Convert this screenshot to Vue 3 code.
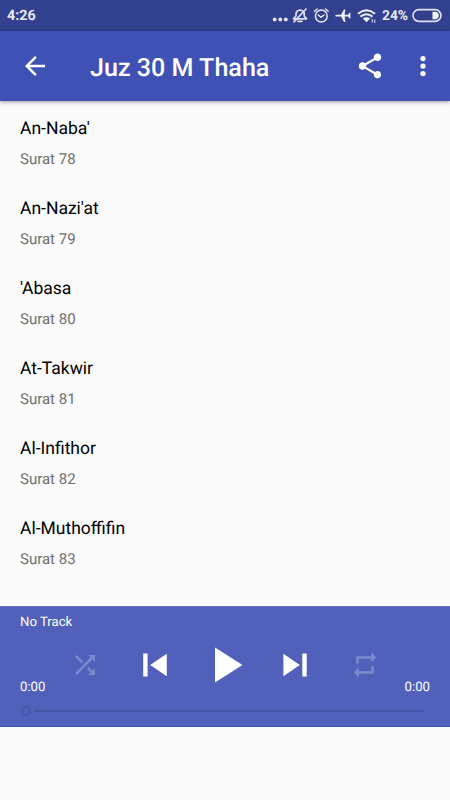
<script setup>
const tracks = [
  { name: "An-Naba'", info: 'Surat 78' },
  { name: "An-Nazi'at", info: 'Surat 79' },
  { name: "'Abasa", info: 'Surat 80' },
  { name: 'At-Takwir', info: 'Surat 81' },
  { name: 'Al-Infithor', info: 'Surat 82' },
  { name: 'Al-Muthoffifin', info: 'Surat 83' },
]
</script>

<template>
  <div class="screen">
    <div class="status">
      <span class="clock">4:26</span>
      <svg class="status-icons" width="108" height="31" viewBox="0 0 108 31">
        <g fill="#e3e5f2">
          <circle cx="2.7" cy="19.5" r="1.9" /><circle cx="8.3" cy="19.5" r="1.9" /><circle cx="13.8" cy="19.5" r="1.9" />
        </g>
        <g fill="none" stroke="#dfe2f1" stroke-width="1.7" stroke-linecap="round" stroke-linejoin="round">
          <path d="M21.5 18.8 L24 16 V13.5 Q24.6 10.4 28 10 Q31.7 10.4 32.2 13.5 V16 L34.6 18.8 Z M26 21.3 H30" />
          <path d="M34 9 L22 21.8" />
        </g>
        <g fill="none" stroke="#e6e8f4" stroke-width="1.5" stroke-linecap="round">
          <circle cx="49.3" cy="16" r="5.9" />
          <path d="M46.3 15 L49 17.3 L52 15 M42.5 11.2 L45.1 9 M56.1 11.2 L53.5 9" />
        </g>
        <path fill="#f0f1f8" d="M63.2 15.7 Q63.5 14.9 65 14.8 H69 L72 9.4 H73.4 L72.6 14.8 H76.2 L77.4 12.8 H78.4 V18.6 H77.4 L76.2 16.6 H72.6 L73.4 22 H72 L69 16.6 H65 Q63.5 16.5 63.2 15.7Z" />
        <g fill="none" stroke="#f0f1f8" stroke-width="2">
          <path d="M86 13.7 Q94.5 6.8 103 13.7 M88.5 16.6 Q94.5 11.8 100.5 16.6" />
        </g>
        <path fill="#f0f1f8" d="M90.8 18.6 Q94.5 15.8 98.2 18.6 L94.5 22.3Z" />
        <path fill="none" stroke="#c9cde6" stroke-width="1.2" d="M100.3 19 V22.5 M102.7 19.5 V23" />
      </svg>
      <span class="percent">24%</span>
      <svg class="battery" width="30" height="31" viewBox="0 0 30 31">
        <rect x="1" y="9.6" width="28" height="11.8" rx="5.9" fill="none" stroke="#dfe2f1" stroke-width="1.6" />
        <path fill="#f4f5fa" d="M20.5 11.7 H23.2 Q26.8 12 26.8 15.5 T23.2 19.3 H20.5Z" />
      </svg>
    </div>

    <header class="bar">
      <svg class="back" width="30" height="30" viewBox="0 0 24 24"><path d="M20 11H7.83l5.59-5.59L12 4l-8 8 8 8 1.41-1.41L7.83 13H20v-2z" /></svg>
      <h1>Juz 30 M Thaha</h1>
      <svg class="share" width="30" height="30" viewBox="0 0 24 24"><path d="M18 16.08c-.76 0-1.44.3-1.96.77L8.91 12.7c.05-.23.09-.46.09-.7s-.04-.47-.09-.7l7.05-4.11c.54.5 1.25.81 2.04.81 1.66 0 3-1.34 3-3s-1.34-3-3-3-3 1.34-3 3c0 .24.04.47.09.7L8.04 9.81C7.5 9.31 6.79 9 6 9c-1.66 0-3 1.34-3 3s1.34 3 3 3c.79 0 1.5-.31 2.04-.81l7.12 4.16c-.05.21-.08.43-.08.65 0 1.61 1.31 2.92 2.92 2.92s2.92-1.31 2.92-2.92-1.31-2.92-2.92-2.92z" /></svg>
      <svg class="more" width="30" height="30" viewBox="0 0 24 24"><circle cx="12" cy="6" r="2.1" /><circle cx="12" cy="12" r="2.1" /><circle cx="12" cy="18" r="2.1" /></svg>
    </header>

    <main class="list">
      <div v-for="t in tracks" :key="t.info" class="row">
        <div class="name">{{ t.name }}</div>
        <div class="info">{{ t.info }}</div>
      </div>
    </main>

    <footer class="player">
      <div class="now">No Track</div>
      <div class="controls">
        <svg class="dim" width="30" height="30" viewBox="0 0 24 24"><path d="M10.59 9.17L5.41 4 4 5.41l5.17 5.17 1.42-1.41zM14.5 4l2.04 2.04L4 18.59 5.41 20 17.96 7.46 20 9.5V4h-5.5zm.33 9.41l-1.41 1.41 3.13 3.13L14.5 20H20v-5.5l-2.04 2.04-3.13-3.13z" /></svg>
        <svg width="48" height="48" viewBox="0 0 48 48"><path d="M12.2 12.4h4.4v23.2h-4.4zM19.2 24L35.8 12.7v22.6z" /></svg>
        <svg width="60" height="60" viewBox="0 0 24 24"><path d="M8 5v14l11-7z" /></svg>
        <svg width="48" height="48" viewBox="0 0 48 48"><path d="M31.3 12.4h4.4v23.2h-4.4zM28.8 24L12.4 12.7v22.6z" /></svg>
        <svg class="dim" width="30" height="30" viewBox="0 0 24 24"><path d="M7 7h10v3l4-4-4-4v3H5v6h2V7zm10 10H7v-3l-4 4 4 4v-3h12v-6h-2v4z" /></svg>
      </div>
      <div class="times"><span>0:00</span><span>0:00</span></div>
      <div class="seek"><span class="thumb"></span><span class="track"></span></div>
    </footer>
  </div>
</template>

<style>
body { background: #fafafa; }
</style>

<style scoped>
.screen {
  width: 450px;
  height: 800px;
  display: flex;
  flex-direction: column;
  background: #fafafa;
  font-family: Roboto, sans-serif;
  text-rendering: geometricPrecision;
  overflow: hidden;
}
svg { display: block; flex: none; }
.status {
  height: 31px;
  flex: none;
  display: flex;
  align-items: center;
  background: #32408f;
  color: #e8eaf5;
  font-size: 14px;
  font-weight: 500;
  padding: 0 7px;
}
.clock { width: 265px; flex: none; line-height: 31px; padding-top: 1px; font-size: 14.3px; font-weight: 700; }
.status-icons { width: 108px; }
.percent { width: 31px; line-height: 31px; padding-top: 2px; margin-left: 2px; white-space: nowrap; font-weight: 700; font-size: 13.8px; }
.battery { margin-left: -1px; }
.bar {
  height: 70px;
  flex: none;
  display: flex;
  align-items: center;
  background: #3f51b5;
  fill: #fff;
  color: #fff;
  padding: 0 12.5px 0 20px;
  box-shadow: 0 1px 4px rgba(0, 0, 0, 0.4);
}
h1 { margin: 6px 0 0 40px; font-size: 25.1px; line-height: 30px; font-weight: 500; flex: 1; }
.more { margin-left: 22.5px; }
.list { height: 505px; flex: none; box-sizing: border-box; padding-top: 8px; }
.row { height: 80px; box-sizing: border-box; padding: 9px 20px 0; }
.name { font-size: 17.5px; line-height: 22px; color: #000; }
.info { font-size: 15px; line-height: 20px; margin-top: 9px; color: #6f6f6f; }
.player {
  height: 121px;
  flex: none;
  box-sizing: border-box;
  background: #5161bb;
  border-top: 1px solid #6976c1;
  border-bottom: 1px solid #3f51b5;
  color: #fff;
  fill: #fff;
  display: flex;
  flex-direction: column;
  font-size: 13.2px;
}
.now { height: 28px; line-height: 31px; padding-left: 20px; }
.controls { height: 60px; display: grid; grid-template-columns: repeat(5, 70px); place-items: center; padding: 0 50px; }
.dim { opacity: 0.25; }
.times { height: 16px; margin-top: -15px; line-height: 16px; padding: 0 20px; display: flex; justify-content: space-between; }
.seek { height: 10px; margin-top: 10px; padding: 0 26px 0 21px; display: flex; align-items: center; gap: 3px; }
.thumb { width: 10px; height: 10px; box-sizing: border-box; border: 2px solid #4656a7; border-radius: 50%; }
.track { flex: 1; height: 2.5px; background: #4656a7; }
</style>
